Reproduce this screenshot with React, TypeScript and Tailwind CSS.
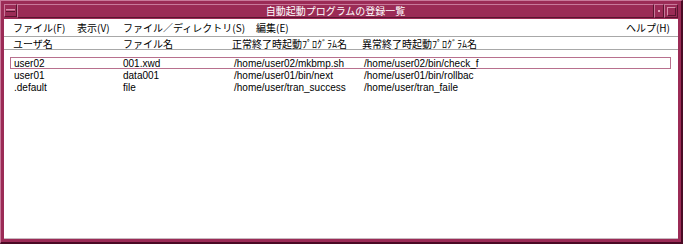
import React from "react";

const jp = { fontFamily: '"Noto Sans CJK JP", "Noto Sans", sans-serif' };
const lat = { fontFamily: '"Liberation Sans", "Noto Sans CJK JP", sans-serif' };

const rows = [
  ["user02", "001.xwd", "/home/user02/mkbmp.sh", "/home/user02/bin/check_f"],
  ["user01", "data001", "/home/user01/bin/next", "/home/user01/bin/rollbac"],
  [".default", "file", "/home/user/tran_success", "/home/user/tran_faile"],
];

export default function App() {
  return (
    <div className="w-[683px] h-[244px] bg-[#9b2b56] border-t border-l border-[#c8789a] border-r-2 border-b-2 border-r-[#4a0a24] border-b-[#4a0a24] px-[3px] pt-[3px] pb-[3px] flex flex-col overflow-hidden">
      {/* title bar */}
      <div className="h-[14px] flex items-stretch">
        <div className="w-[13px] h-[13px] bg-[#9b2b56] border border-t-[#c8789a] border-l-[#c8789a] border-r-[#5a1430] border-b-[#5a1430] flex items-center justify-center">
          <div className="w-[9px] h-[3px] bg-[#b9557c] border-t border-[#d890ad] border-b border-b-[#5a1430]" />
        </div>
        <div
          className="flex-1 flex items-center justify-center text-white text-[10px] leading-none border border-t-[#c8789a] border-l-[#c8789a] border-r-[#5a1430] border-b-[#5a1430]"
          style={jp}
        >
          自動起動プログラムの登録一覧
        </div>
        <div className="w-[10px] h-[14px] border border-t-[#c8789a] border-l-[#c8789a] border-r-[#5a1430] border-b-[#5a1430] flex items-center justify-center">
          <div className="w-[2px] h-[2px] bg-[#e0a0b8]" />
        </div>
        <div className="w-[14px] h-[14px] border border-t-[#c8789a] border-l-[#c8789a] border-r-[#5a1430] border-b-[#5a1430] flex items-center justify-center">
          <div className="w-[9px] h-[9px] border border-t-[#d890ad] border-l-[#d890ad] border-r-[#5a1430] border-b-[#5a1430]" />
        </div>
      </div>
      {/* client */}
      <div className="flex-1 bg-white mt-[1px] flex flex-col border-b border-[#c8b8c0]">
        {/* menu bar */}
        <div className="h-[18px] flex items-center text-[10px] text-black pl-[9px] pr-[8px] border-b border-[#a8a8a8]" style={jp}>
          <span className="w-[64px]">ファイル(F)</span>
          <span className="w-[46px]">表示(V)</span>
          <span className="w-[133px]">ファイル／ディレクトリ(S)</span>
          <span>編集(E)</span>
          <span className="ml-auto">ヘルプ(H)</span>
        </div>
        {/* header */}
        <div className="h-[13px] flex items-center text-[10px] text-black pl-[9px] border-b border-[#a8a8a8]" style={jp}>
          <span className="w-[110px]">ユーザ名</span>
          <span className="w-[109px]">ファイル名</span>
          <span className="w-[130px]">正常終了時起動ﾌﾟﾛｸﾞﾗﾑ名</span>
          <span>異常終了時起動ﾌﾟﾛｸﾞﾗﾑ名</span>
        </div>
        {/* list */}
        <div className="pt-[7px] pl-[6px] pr-[7px] flex flex-col">
          {rows.map((r, i) => (
            <div
              key={i}
              className={
                "h-[12px] flex items-center text-[10px] leading-none text-black pl-[3px] pt-[1px] border " +
                (i === 0 ? "border-[#b8708e]" : "border-transparent")
              }
              style={lat}
            >
              <span className="w-[109px]">{r[0]}</span>
              <span className="w-[111px]">{r[1]}</span>
              <span className="w-[130px]">{r[2]}</span>
              <span>{r[3]}</span>
            </div>
          ))}
        </div>
      </div>
    </div>
  );
}
